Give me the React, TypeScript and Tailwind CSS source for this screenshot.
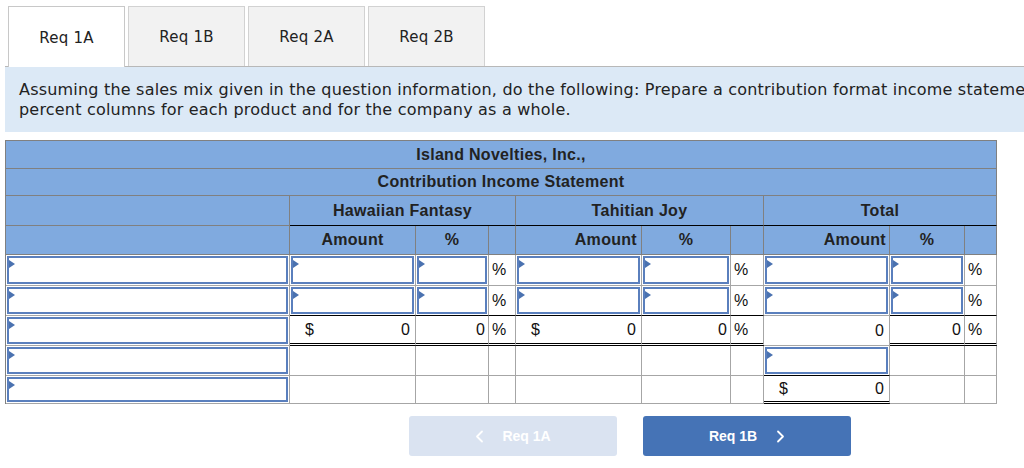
import React from 'react';

const COLS = 'grid grid-cols-[284px_126px_73px_27px_126px_89px_33px_126px_75px_32px]';

// header cell base
const HD = 'bg-[#80aadf] border-r border-b border-[#808080] font-bold text-[16px] tracking-[0.3px] text-[#222] flex items-center';
// data cell base
const DC = 'border-r border-b border-[#a6a6a6] bg-white text-[16px] text-[#111] flex items-center';

const Flag = () => (
  <span className="absolute left-0 top-[2px] w-0 h-0 border-y-[4px] border-y-transparent border-l-[6px] border-l-[#4a72b0]" />
);

const Input = ({ extra = '' }: { extra?: string }) => (
  <div className={`${DC} ${extra} p-[1px]`}>
    <div className="relative w-full h-full border-2 border-[#5a7fbd] bg-white">
      <Flag />
    </div>
  </div>
);

const Cell = ({ children, extra = '' }: { children?: React.ReactNode; extra?: string }) => (
  <div className={`${DC} ${extra}`}>{children}</div>
);

const Money = ({ dollar = true }: { dollar?: boolean }) => (
  <div className="w-full flex justify-between pl-[15px] pr-[5px]">
    <span>{dollar ? '$' : ''}</span>
    <span>0</span>
  </div>
);

const Pct = () => <span className="pl-[3px]">%</span>;

const Chevron = ({ left }: { left?: boolean }) => (
  <svg width="9" height="13" viewBox="0 0 9 13" fill="none" stroke="currentColor" strokeWidth="1.8" strokeLinecap="round" strokeLinejoin="round">
    {left ? <path d="M7 1.5 L2 6.5 L7 11.5" /> : <path d="M2 1.5 L7 6.5 L2 11.5" />}
  </svg>
);

export default function App() {
  const tabs = ['Req 1A', 'Req 1B', 'Req 2A', 'Req 2B'];
  const blk = 'border-b-black';
  const dbl = 'border-b-[3px] border-b-black border-double';

  return (
    <div className="w-[1024px] h-[468px] overflow-hidden bg-white font-['Liberation_Sans',Arial,sans-serif]">
      {/* tabs */}
      <div className="flex gap-[3px] pl-[8px] pt-[6px] font-['DejaVu_Sans',Verdana,sans-serif] text-[15px] tracking-[0.2px] text-[#222]">
        {tabs.map((t, i) => (
          <div
            key={t}
            className={
              i === 0
                ? 'relative z-10 -mb-px w-[117px] h-[61px] bg-white border border-b-0 border-[#c8c8c8] flex items-center justify-center pt-[2px]'
                : 'w-[117px] h-[60px] bg-[#f2f2f2] border border-b-0 border-[#d2d2d2] flex items-center justify-center pt-[2px]'
            }
          >
            {t}
          </div>
        ))}
      </div>

      {/* instructions */}
      <div className="ml-[5px] w-[1200px] border-t border-[#b8b8b8] bg-[#dce9f6] pt-[13px] pb-[12px] pl-[14px] font-['DejaVu_Sans',Verdana,sans-serif] text-[16px] tracking-[0.2px] leading-[20px] text-[#222] whitespace-nowrap">
        Assuming the sales mix given in the question information, do the following: Prepare a contribution format income statement with amount and
        <br />
        percent columns for each product and for the company as a whole.
      </div>

      {/* statement */}
      <div className={`${COLS} grid-rows-[28px_27px_30px_29px_31px_30px_30px_30px_28px] ml-[5px] mt-[8px] w-[992px] border-l border-t border-[#808080]`}>
        <div className={`${HD} col-span-10 justify-center`}>Island Novelties, Inc.,</div>
        <div className={`${HD} col-span-10 justify-center`}>Contribution Income Statement</div>

        <div className={HD} />
        <div className={`${HD} col-span-3 justify-center border-b-black`}>Hawaiian Fantasy</div>
        <div className={`${HD} col-span-3 justify-center border-b-black`}>Tahitian Joy</div>
        <div className={`${HD} col-span-3 justify-center border-b-black`}>Total</div>

        <div className={HD} />
        <div className={`${HD} justify-center`}>Amount</div>
        <div className={`${HD} justify-center`}>%</div>
        <div className={HD} />
        <div className={`${HD} justify-end pr-[4px]`}>Amount</div>
        <div className={`${HD} justify-center`}>%</div>
        <div className={HD} />
        <div className={`${HD} justify-end pr-[3px]`}>Amount</div>
        <div className={`${HD} justify-center`}>%</div>
        <div className={HD} />

        {/* row 1 */}
        <Input />
        <Input />
        <Input />
        <Cell><Pct /></Cell>
        <Input />
        <Input />
        <Cell><Pct /></Cell>
        <Input />
        <Input />
        <Cell><Pct /></Cell>

        {/* row 2 */}
        <Input />
        <Input extra={blk} />
        <Input extra={blk} />
        <Cell extra={blk}><Pct /></Cell>
        <Input extra={blk} />
        <Input extra={blk} />
        <Cell extra={blk}><Pct /></Cell>
        <Input />
        <Input extra={blk} />
        <Cell extra={blk}><Pct /></Cell>

        {/* row 3 totals */}
        <Input />
        <Cell extra={dbl}><Money /></Cell>
        <Cell extra={`${dbl} justify-end pr-[3px]`}>0</Cell>
        <Cell extra={dbl}><Pct /></Cell>
        <Cell extra={dbl}><Money /></Cell>
        <Cell extra={`${dbl} justify-end pr-[3px]`}>0</Cell>
        <Cell extra={dbl}><Pct /></Cell>
        <Cell><Money dollar={false} /></Cell>
        <Cell extra={`${dbl} justify-end pr-[3px]`}>0</Cell>
        <Cell extra={dbl}><Pct /></Cell>

        {/* row 4 */}
        <Input />
        <Cell />
        <Cell />
        <Cell />
        <Cell />
        <Cell />
        <Cell />
        <Input extra={blk} />
        <Cell />
        <Cell />

        {/* row 5 */}
        <Input />
        <Cell />
        <Cell />
        <Cell />
        <Cell />
        <Cell />
        <Cell />
        <Cell extra={dbl}><Money /></Cell>
        <Cell />
        <Cell />
      </div>

      {/* navigation */}
      <div className="flex gap-[26px] pl-[409px] mt-[12px] text-[14px] font-bold text-white">
        <div className="w-[208px] h-[40px] rounded-[3px] bg-[#dae3f1] flex items-center justify-center gap-[18px]">
          <Chevron left />
          <span>Req 1A</span>
        </div>
        <div className="w-[208px] h-[40px] rounded-[3px] bg-[#4573b6] flex items-center justify-center gap-[19px]">
          <span>Req 1B</span>
          <Chevron />
        </div>
      </div>
    </div>
  );
}
